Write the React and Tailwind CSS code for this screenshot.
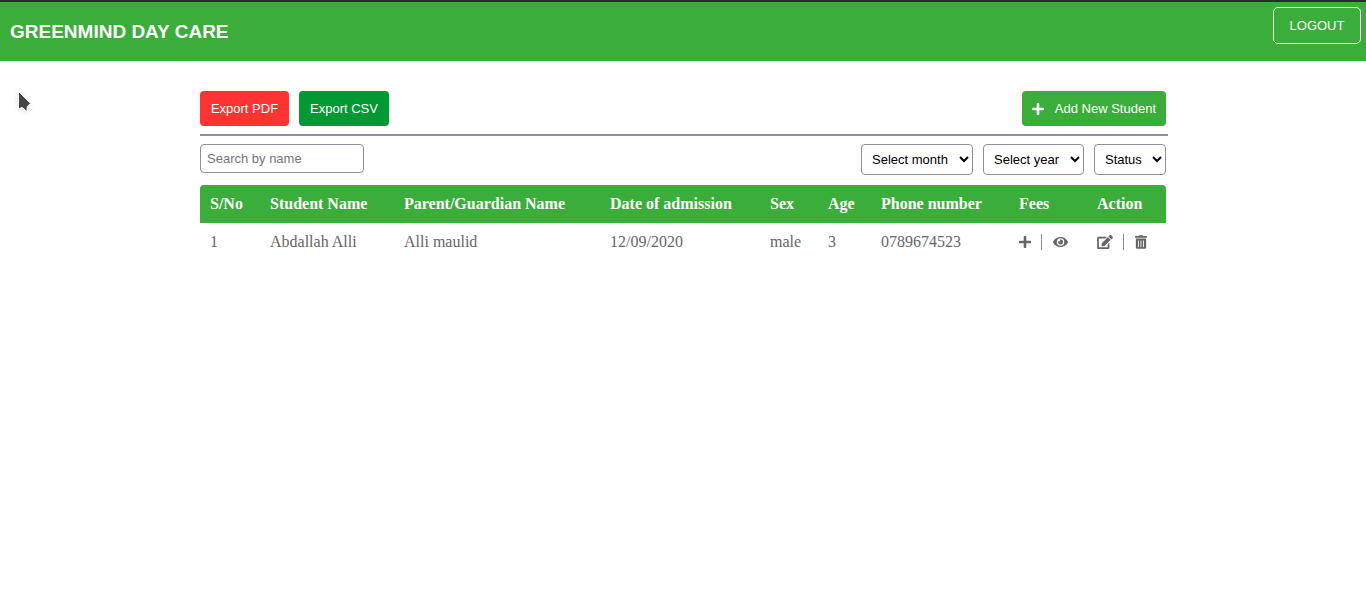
import { FaEdit, FaEye, FaPlus, FaTrashAlt } from "react-icons/fa";

const columns = [
  { label: "S/No", width: "w-[60px]" },
  { label: "Student Name", width: "w-[134px]" },
  { label: "Parent/Guardian Name", width: "w-[206px]" },
  { label: "Date of admission", width: "w-[160px]" },
  { label: "Sex", width: "w-[58px]" },
  { label: "Age", width: "w-[53px]" },
  { label: "Phone number", width: "w-[138px]" },
  { label: "Fees", width: "w-[78px]" },
  { label: "Action", width: "w-[79px]" },
];

const students = [
  {
    id: 1,
    name: "Abdallah Alli",
    guardian: "Alli maulid",
    admitted: "12/09/2020",
    sex: "male",
    age: 3,
    phone: "0789674523",
  },
];

const selectClass =
  "h-[31px] rounded border border-[#8f8f9d] bg-white px-[6px] text-black";

function Header() {
  return (
    <header className="flex items-start justify-between border-t-2 border-[#2b2b2b] bg-[#3aad3a] pb-[15px] pl-[10px] pr-[5px] pt-[5px] text-white">
      <h1 className="pt-[10px] text-[19px] font-bold leading-[29px]">GREENMIND DAY CARE</h1>
      <button type="button" className="h-[37px] w-[88px] rounded-[5px] border border-white text-[13px]">
        LOGOUT
      </button>
    </header>
  );
}

function Pointer() {
  return (
    <svg
      className="pointer-events-none absolute left-[16px] top-[89px] drop-shadow-sm"
      width="18"
      height="26"
      viewBox="0 0 18 26"
      aria-hidden="true"
    >
      <path
        d="M2.5 2.5V20l3.8-1.6 4.6 4.2.5-5.2 3.2-3z"
        fill="#444"
        stroke="#fff"
        strokeWidth="1"
      />
    </svg>
  );
}

function ActionPair({ first, second }) {
  return (
    <div className="flex items-center">
      {first}
      <span className="ml-[10px] mr-[11px] h-4 w-px bg-[#8a8a8a]" />
      {second}
    </div>
  );
}

function IconButton({ label, icon: Icon, iconClass }) {
  return (
    <button type="button" aria-label={label} className="flex shrink-0">
      <Icon className={iconClass} />
    </button>
  );
}

export default function App() {
  return (
    <div className="min-h-screen bg-white font-['Liberation_Sans',Arial,sans-serif] text-[13px]">
      <Header />
      <Pointer />
      <main className="mx-[200px] pt-[30px]">
        <div className="flex justify-between text-white">
          <div className="flex gap-[10px]">
            <button type="button" className="h-[35px] w-[89px] rounded bg-[#ff3333]">
              Export PDF
            </button>
            <button type="button" className="h-[35px] w-[90px] rounded bg-[#009933]">
              Export CSV
            </button>
          </div>
          <button
            type="button"
            className="flex h-[35px] w-[144px] items-center justify-between rounded bg-[#3aad3a] px-[10px]"
          >
            <FaPlus className="h-[14px] w-3" />
            Add New Student
          </button>
        </div>
        <hr className="-mr-[2px] mt-2 border-t-2 border-[#8f8f9d]" />
        <div className="mt-2 flex justify-between">
          <input
            type="text"
            aria-label="Search by name"
            placeholder="Search by name"
            className="h-[29px] w-[164px] rounded border border-[#8f8f9d] px-[6px] placeholder:text-[#757575]"
          />
          <div className="flex gap-[10px]">
            <select aria-label="Month" className={`${selectClass} w-[112px]`}>
              <option>Select month</option>
            </select>
            <select aria-label="Year" className={`${selectClass} w-[101px]`}>
              <option>Select year</option>
            </select>
            <select aria-label="Status" className={`${selectClass} w-[72px]`}>
              <option>Status</option>
            </select>
          </div>
        </div>
        <table className="mt-[10px] w-full table-fixed text-left font-['Liberation_Serif','Times_New_Roman',serif] text-[16px] leading-[18px]">
          <thead className="text-white">
            <tr>
              {columns.map((column) => (
                <th
                  key={column.label}
                  scope="col"
                  className={`${column.width} whitespace-nowrap bg-[#3aad3a] p-[10px] font-bold first:rounded-tl last:rounded-tr`}
                >
                  {column.label}
                </th>
              ))}
            </tr>
          </thead>
          <tbody className="text-[#666666]">
            {students.map((student) => (
              <tr key={student.id}>
                <td className="p-[10px]">{student.id}</td>
                <td className="p-[10px]">{student.name}</td>
                <td className="p-[10px]">{student.guardian}</td>
                <td className="p-[10px]">{student.admitted}</td>
                <td className="p-[10px]">{student.sex}</td>
                <td className="p-[10px]">{student.age}</td>
                <td className="p-[10px]">{student.phone}</td>
                <td className="py-[10px] pl-[10px]">
                  <ActionPair
                    first={<IconButton label="Add fees" icon={FaPlus} iconClass="h-[14px] w-3" />}
                    second={<IconButton label="View fees" icon={FaEye} iconClass="h-[14px] w-[15px]" />}
                  />
                </td>
                <td className="py-[10px] pl-[10px]">
                  <ActionPair
                    first={<IconButton label="Edit student" icon={FaEdit} iconClass="h-[14px] w-4" />}
                    second={<IconButton label="Delete student" icon={FaTrashAlt} iconClass="h-[14px] w-3" />}
                  />
                </td>
              </tr>
            ))}
          </tbody>
        </table>
      </main>
    </div>
  );
}
